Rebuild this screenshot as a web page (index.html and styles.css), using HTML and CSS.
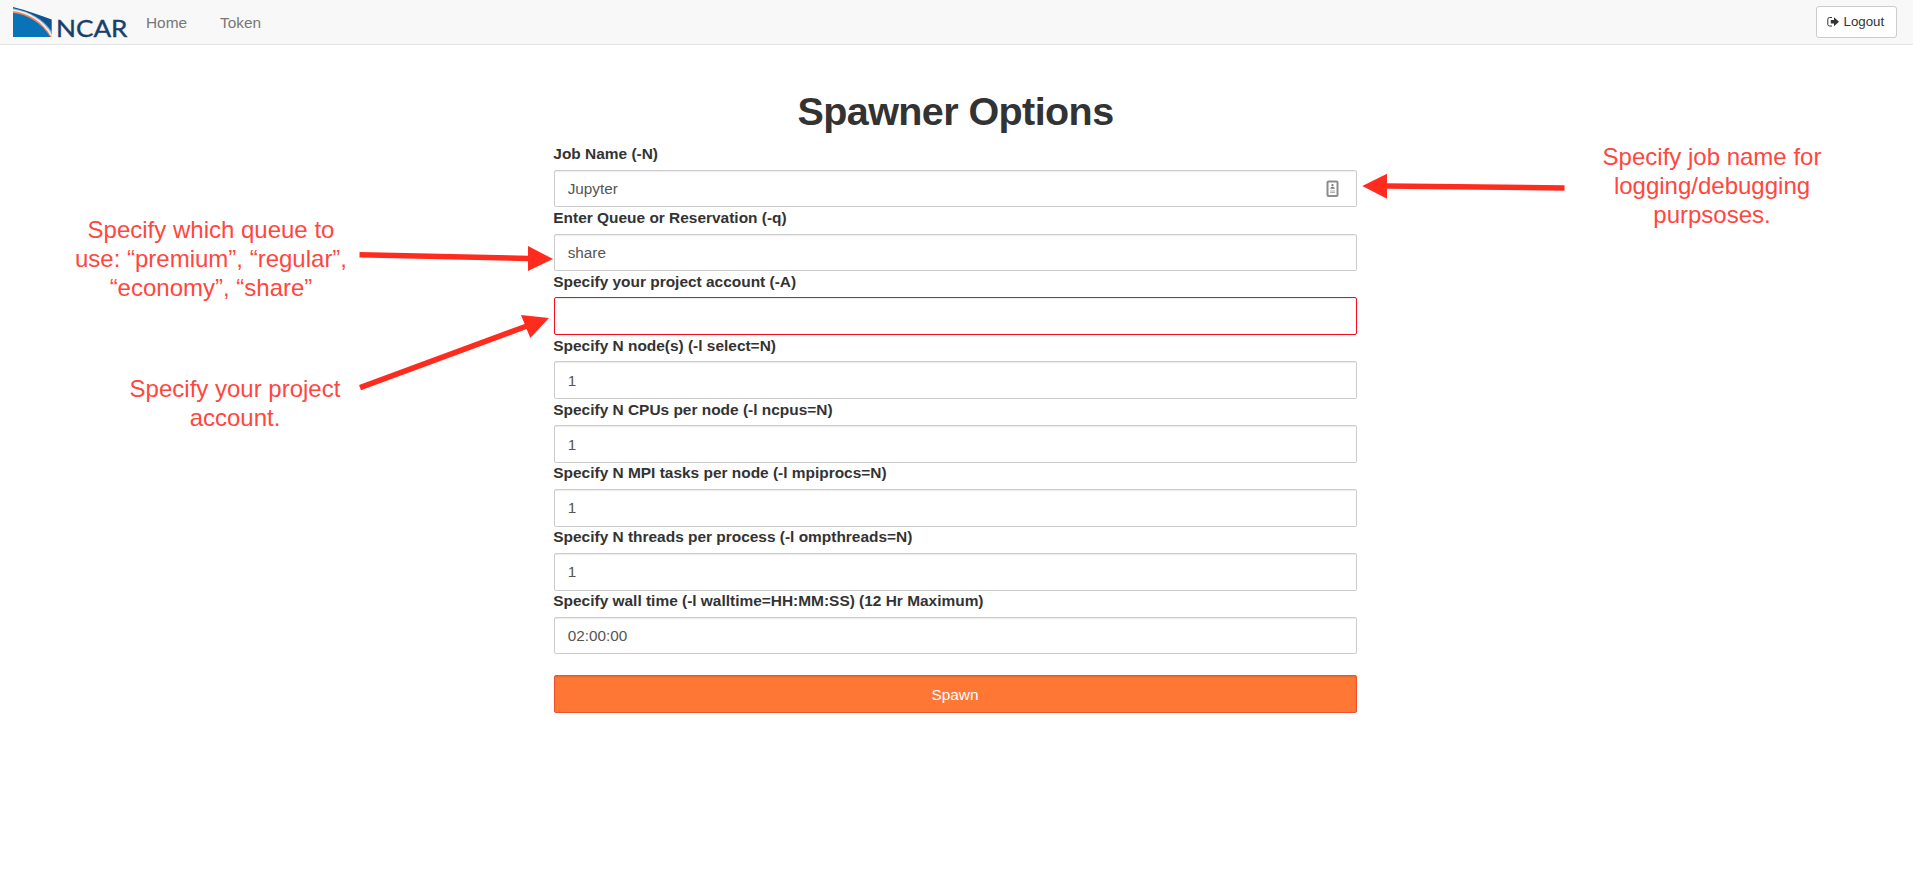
FILE: index.html
```html
<!DOCTYPE html>
<html lang="en">
<head>
<meta charset="utf-8">
<title>Spawner Options</title>
<link rel="stylesheet" href="styles.css">
</head>
<body>
<header class="navbar">
  <a class="brand" aria-label="NCAR">
    <svg width="118" height="36" viewBox="0 -3 118 36">
      <path d="M0 0C14 3.500 27 8.500 38.700 12.500V30H0Z" fill="#0f5390"/>
      <path d="M0 1.200C17 4.500 30 12 38.700 24.500V30H0Z" fill="#8fb9da"/>
      <path d="M0 2.600C16 5 30 13 38.700 27.500V30H0Z" fill="#fbf6f4"/>
      <path d="M0 4C16 6 29 14 38.600 30H0Z" fill="#f0885a"/>
      <path d="M0 6C15 7.500 28 15.500 37.300 30H0Z" fill="#0873b6"/>
      <text class="brand-text" x="43" y="29.500" textLength="71.500" lengthAdjust="spacingAndGlyphs">NCAR</text>
    </svg>
  </a>
  <nav class="nav">
    <a>Home</a>
    <a>Token</a>
  </nav>
  <a class="logout">
    <svg width="12" height="12" viewBox="0 0 12 12">
      <path d="M5 1.500H2.500Q.8 1.500 .8 3.200V8.300Q.8 10 2.500 10H5" fill="none" stroke="#333" stroke-width="1"/>
      <path d="M3.800 4H7V1.300L12 5.750L7 10.200V7.500H3.800Z" fill="#333"/>
    </svg>
    <span>Logout</span>
  </a>
</header>

<main class="content">
  <h1 class="title">Spawner Options</h1>
  <form class="form">
    <label class="label">Job Name (-N)</label>
    <div class="field">
      <span>Jupyter</span>
      <svg class="autofill" width="14" height="18" viewBox="0 0 14 18">
        <rect x="1.500" y="1.500" width="10" height="14.500" rx="1" fill="#fff" stroke="#8c8c8c" stroke-width="2"/>
        <circle cx="6.500" cy="5.200" r="1.100" fill="#777"/>
        <path d="M4.300 8.800Q4.300 6.800 6.500 6.800T8.800 8.800Z" fill="#777"/>
        <path d="M4.200 11H8.900M4.200 12.500H8.900" stroke="#aaa" stroke-width="1"/>
      </svg>
    </div>
    <label class="label">Enter Queue or Reservation (-q)</label>
    <div class="field">share</div>
    <label class="label">Specify your project account (-A)</label>
    <div class="field field-invalid"></div>
    <label class="label">Specify N node(s) (-l select=N)</label>
    <div class="field">1</div>
    <label class="label">Specify N CPUs per node (-l ncpus=N)</label>
    <div class="field">1</div>
    <label class="label">Specify N MPI tasks per node (-l mpiprocs=N)</label>
    <div class="field">1</div>
    <label class="label">Specify N threads per process (-l ompthreads=N)</label>
    <div class="field">1</div>
    <label class="label">Specify wall time (-l walltime=HH:MM:SS) (12 Hr Maximum)</label>
    <div class="field">02:00:00</div>
    <div class="spawn">Spawn</div>
  </form>
</main>

<svg class="arrows" width="1913" height="888" viewBox="0 0 1913 888">
  <g stroke="#ff2b1f" stroke-width="5.500">
    <path d="M1386 186L1564.500 188"/>
    <path d="M359.500 254.700L529 258.500"/>
    <path d="M360 387.700L527 326"/>
  </g>
  <g fill="#ff2b1f">
    <path d="M1362.300 186L1387 173.700V198.700Z"/>
    <path d="M553 259L528 246V271Z"/>
    <path d="M549 318L521 315L530.300 338Z"/>
  </g>
</svg>
<p class="note note-job">Specify job name for<br>logging/debugging<br>purpsoses.</p>
<p class="note note-queue">Specify which queue to<br>use: “premium”, “regular”,<br>“economy”, “share”</p>
<p class="note note-account">Specify your project<br>account.</p>
</body>
</html>
```
FILE: styles.css
```css
* { box-sizing: border-box; }

body {
  margin: 0;
  background: #fff;
  color: #333;
  font: 15.2px/20px "Liberation Sans", Arial, sans-serif;
}

.navbar {
  display: flex;
  align-items: center;
  height: 45px;
  padding: 0 16px 0 13px;
  background: #f8f8f8;
  border-bottom: 1px solid #e4e4e4;
}

.brand { display: flex; }

.brand-text {
  font: 24px Lato, sans-serif;
  fill: #173f6b;
  stroke: #173f6b;
  stroke-width: .4px;
}

.nav {
  display: flex;
  flex: 1;
  gap: 33px;
  padding: 1px 0 0 15px;
  color: #777;
  font-size: 15.4px;
}

.logout {
  display: flex;
  align-items: center;
  gap: 4.5px;
  width: 81px;
  height: 32px;
  padding-left: 10px;
  background: #fff;
  border: 1px solid #ccc;
  border-radius: 3px;
  font-size: 13.3px;
}

.content {
  width: 803px;
  margin: 0 auto 0 554px;
  padding-top: 44px;
}

.title {
  margin: 0;
  font-size: 39.5px;
  letter-spacing: -.58px;
  line-height: 45px;
  text-align: center;
}

.form {
  display: flex;
  flex-direction: column;
  padding-top: 9.3px;
}

.label {
  height: 26.4px;
  margin-left: -.7px;
  padding-top: .7px;
  font-size: 15.44px;
  font-weight: bold;
}

.field {
  display: flex;
  align-items: center;
  justify-content: space-between;
  height: 37.5px;
  padding: 1px 16.5px 0 12.7px;
  border: 1px solid #ccc;
  border-radius: 2px;
  box-shadow: inset 0 1px 1px rgba(0, 0, 0, .075);
  color: #555;
  font-size: 15.3px;
}

.field-invalid { border-color: #fa0a20; }

.spawn {
  height: 38px;
  margin-top: 20.8px;
  padding-right: 1px;
  border: 1px solid #f05030;
  border-radius: 2px;
  background: #ff7735;
  box-shadow: inset 0 1px 2px rgba(0, 0, 0, .12);
  color: #fff;
  font-size: 15.4px;
  line-height: 38px;
  text-align: center;
}

.arrows {
  position: absolute;
  top: 0;
  left: 0;
}

.note {
  position: absolute;
  width: 300px;
  margin: 0;
  color: #ff4740;
  font-size: 24px;
  line-height: 29.2px;
  text-align: center;
}

.note-job { left: 1562px; top: 142px; }
.note-queue { left: 61px; top: 215px; }
.note-account { left: 85px; top: 374px; }
```
